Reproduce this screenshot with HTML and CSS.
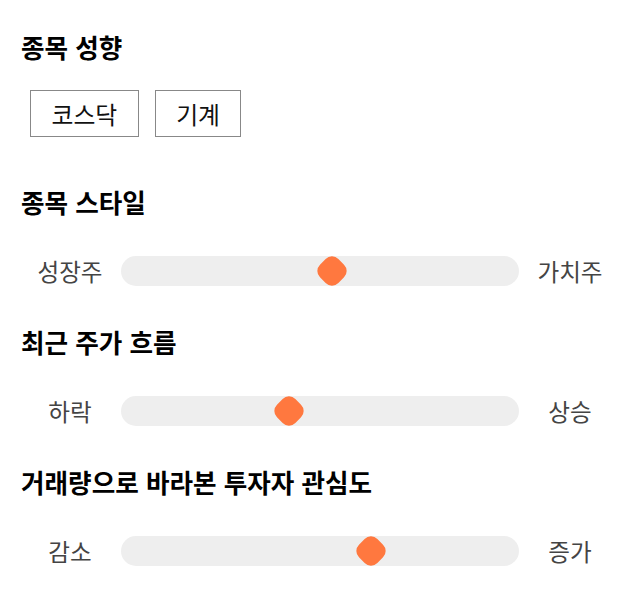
FILE: index.html
```html
<!DOCTYPE html>
<html lang="ko">
<head>
<meta charset="utf-8">
<link rel="stylesheet" href="styles.css">
</head>
<body>
<main class="panel">
  <section class="group group-first">
    <h2 class="title">종목 성향</h2>
    <div class="tags">
      <span class="tag">코스닥</span>
      <span class="tag">기계</span>
    </div>
  </section>
  <section class="group group-second">
    <h2 class="title">종목 스타일</h2>
    <div class="slider">
      <span class="end">성장주</span>
      <div class="track"><span class="thumb" style="left:53.1%"></span></div>
      <span class="end">가치주</span>
    </div>
  </section>
  <section class="group">
    <h2 class="title">최근 주가 흐름</h2>
    <div class="slider">
      <span class="end">하락</span>
      <div class="track"><span class="thumb" style="left:42.3%"></span></div>
      <span class="end">상승</span>
    </div>
  </section>
  <section class="group">
    <h2 class="title">거래량으로 바라본 투자자 관심도</h2>
    <div class="slider">
      <span class="end">감소</span>
      <div class="track"><span class="thumb" style="left:62.7%"></span></div>
      <span class="end">증가</span>
    </div>
  </section>
</main>
</body>
</html>
```

FILE: styles.css
```css
* { box-sizing: border-box; }
html, body { margin: 0; padding: 0; background: #fff; }
body {
  font-family: "Noto Sans CJK KR", "Noto Sans", sans-serif;
  color: #111;
}
.panel {
  padding: 31px 20px 0 20px;
  display: flex;
  flex-direction: column;
}
.group { display: flex; flex-direction: column; margin-top: 40px; }
.group-first { margin-top: 0; }
.group.group-second { margin-top: 49px; }
.title {
  margin: 0 0 0 1px;
  height: 32px;
  line-height: 32px;
  font-size: 25.6px;
  font-weight: 700;
  color: #000;
  white-space: nowrap;
}
.tags {
  display: flex;
  gap: 16px;
  margin-top: 27px;
  padding-left: 10px;
}
.tag {
  height: 47px;
  line-height: 45px;
  padding: 0 20.5px;
  border: 1px solid #888;
  font-size: 23.8px;
  color: #111;
}
.slider {
  display: flex;
  align-items: center;
  margin-top: 38px;
  height: 30px;
}
.end {
  width: 100px;
  text-align: center;
  font-size: 23.6px;
  color: #444;
  line-height: 30px;
  white-space: nowrap;
}
.track {
  flex: 1;
  height: 30px;
  margin: 0 1px;
  background: #eee;
  border-radius: 15px;
  position: relative;
}
.thumb {
  position: absolute;
  top: 2px;
  width: 26px;
  height: 26px;
  margin-left: -13px;
  background: #ff783f;
  border-radius: 9px;
  transform: rotate(45deg);
}
```
